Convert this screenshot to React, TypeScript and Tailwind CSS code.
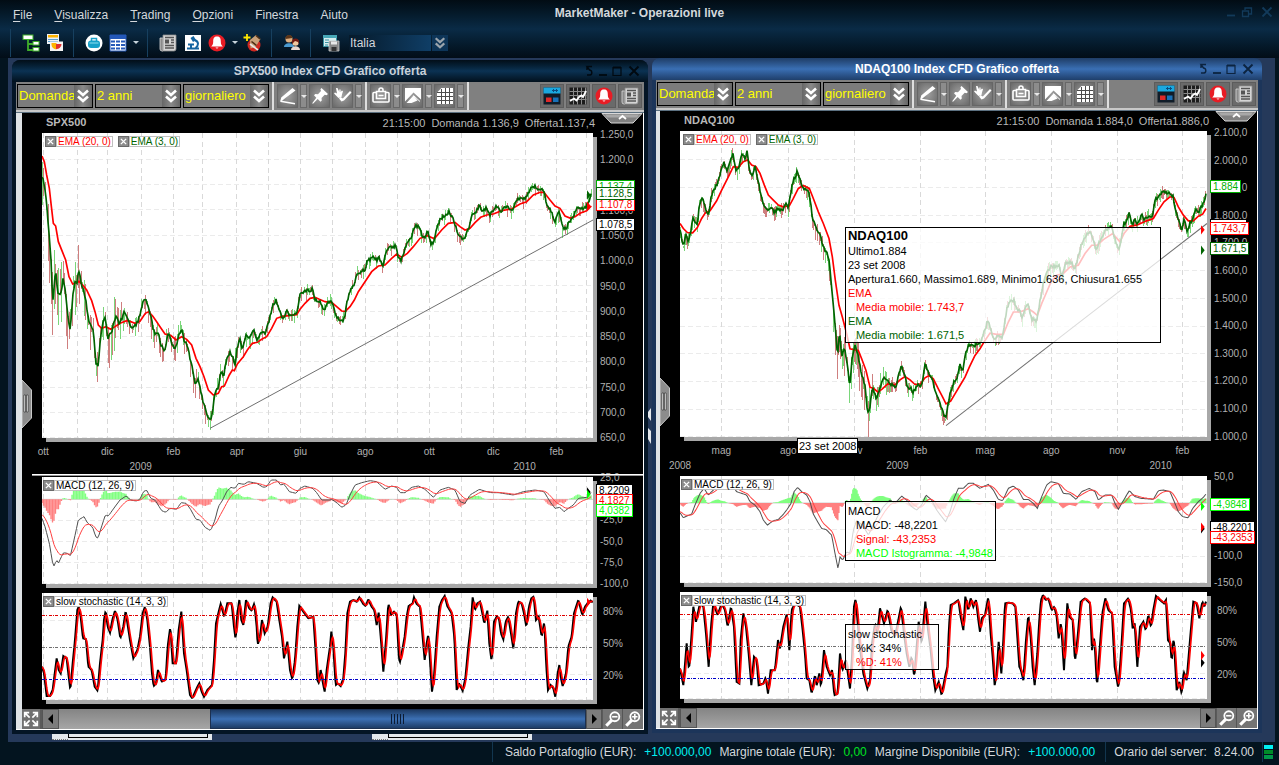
import React from "react";

type Point = [number, number];

/* ---------- series helpers ---------- */

const part = (dx: number, dy: number, text: string): Point[] =>
  text
    .trim()
    .split(/\s+/)
    .map((pair) => {
      const [x, y] = pair.split(",").map(Number);
      return [x + dx, y + dy];
    });

const valueAt = (pts: Point[], x: number): number => {
  if (x <= pts[0][0]) return pts[0][1];
  for (let i = 1; i < pts.length; i++) {
    if (x <= pts[i][0]) {
      const [x0, y0] = pts[i - 1];
      const [x1, y1] = pts[i];
      return x1 === x0 ? y1 : y0 + ((y1 - y0) * (x - x0)) / (x1 - x0);
    }
  }
  return pts[pts.length - 1][1];
};

const noise = (i: number): number => {
  const v = Math.sin(i * 127.1 + 11.7) * 43758.5453;
  return v - Math.floor(v);
};

const toPath = (pts: Point[]): string =>
  pts.map(([x, y], i) => `${i ? "L" : "M"}${x.toFixed(1)} ${y.toFixed(1)}`).join("");

const resample = (pts: Point[], step: number): Point[] => {
  const out: Point[] = [];
  const end = pts[pts.length - 1][0];
  for (let x = 0; x <= end; x += step) out.push([x, valueAt(pts, x)]);
  return out;
};

const ema = (pts: Point[], n: number, start: number): Point[] => {
  const k = 2 / (n + 1);
  let v = start;
  return pts.map(([x, y]) => {
    v = v + k * (y - v);
    return [x, v];
  });
};

const average = (pts: Point[], n: number): Point[] =>
  pts.map(([x], i) => {
    const from = Math.max(0, i - n + 1);
    const window = pts.slice(from, i + 1);
    return [x, window.reduce((s, p) => s + p[1], 0) / window.length];
  });

/* ---------- market data, three units to a pixel ---------- */

interface Market {
  name: string;
  title: string;
  bid: string;
  offer: string;
  width: number;
  step: number;
  grid: number[];
  rows: number[];
  months: [number, string][];
  years: [number, string][];
  prices: string[];
  fast: Point[];
  slow: Point[];
  trend: [number, number, number, number];
  macd: Point[];
  macdStart: number;
  macdZero: number;
  macdRows: number[];
  macdLabels: string[];
  stoch: Point[];
  amp: (x: number) => number;
}

const spx: Market = {
  name: "SPX500",
  title: "SPX500 Index CFD Grafico offerta",
  bid: "1.136,9",
  offer: "1.137,4",
  width: 1653,
  step: 4.5,
  grid: [4, 106, 196, 298, 394, 481, 583, 679, 775, 872, 970, 1066, 1162, 1258, 1354, 1450, 1543, 1633],
  rows: [79, 154, 229, 307, 382, 457, 535, 610, 685, 763, 838, 913],
  months: [[4, "ott"], [196, "dic"], [394, "feb"], [585, "apr"], [775, "giu"], [970, "ago"], [1162, "ott"], [1354, "dic"], [1543, "feb"]],
  years: [[296, "2009"], [1448, "2010"]],
  prices: ["1.250,0", "1.200,0", "", "1.100,0", "1.050,0", "1.000,0", "950,0", "900,0", "850,0", "800,0", "750,0", "700,0", "650,0"],
  fast: [
    ...part(-126, -69, "126,198 133,222 140,285 148,380 153,450 158,578 163,520 167,476 173,548 184,548 189,508 196,545 203,610 211,665 218,560 224,518 232,515 236,475 243,520 250,535 258,575 265,630 273,650 281,665 287,760 295,765 302,680 309,640 315,625 324,685 335,665 341,640 348,617 357,640 366,625 373,604 382,625 392,648 402,652 411,640 420,615 427,580 436,562 444,590 453,620 460,660 467,675 473,660 482,705 494,720 505,670 512,690 520,712 530,708 537,670 545,660 552,690 560,700 568,735 577,775 586,820 595,808 604,850 613,890 622,915 631,935 638,900 646,845 655,830 663,785 671,800 679,750 690,728 699,745 705,765 712,710 720,690 727,715 738,675 748,688 760,658 770,688 785,668 797,668 808,630 818,585 828,570 838,600 850,628 860,600 870,618 885,612 893,600 900,555 915,545 938,538 945,570 960,575 971,605 980,580 990,572"),
    ...part(834, -69, "35,570 45,610 57,628 68,635 76,610 82,570 90,545 103,520 112,488 125,485 135,478 142,452 152,448 160,440 170,450 177,440 188,468 200,420 215,410 227,408 235,445 243,450 250,430 262,398 275,380 285,348 298,348 306,375 315,385 323,365 333,402 342,395 350,355 362,325 375,318 387,305 398,322 408,350 415,375 423,382 433,385 445,360 455,312 468,305 478,288 490,305 500,292 510,315 522,298 530,288 542,308 555,292 565,292 577,298 590,272 600,262 615,268 630,240 640,228 655,235 668,238 674,245 680,288 692,302 705,335 718,302 728,355 740,352 750,332 760,318 772,290 785,298 798,290 806,275 814,252"),
  ],
  slow: [
    ...part(-126, -69, "126,138 133,155 140,195 148,235 153,280 160,340 167,348 175,395 187,425 197,450 207,500 218,522 228,518 237,514 248,525 260,540 275,572 285,605 295,645 305,655 318,650 332,658 345,650 360,640 380,632 392,635 405,640 420,634 436,610 446,605 458,618 470,635 480,650 495,672 512,676 528,690 545,680 560,688 575,705 588,745 600,770 612,800 625,840 640,855 655,850 665,830 673,828 688,795 697,780 703,782 712,762 730,740 742,720 757,700 772,697 785,688 800,680 815,655 830,625 845,620 870,616 890,614 900,598 915,580 930,565 945,562 958,568 975,575 990,577"),
    ...part(834, -69, "35,577 50,590 65,603 76,604 90,590 103,570 115,545 135,515 155,485 175,468 195,465 215,445 230,432 245,442 262,430 280,410 300,385 322,377 343,386 365,360 385,340 405,337 420,350 435,360 450,355 465,338 482,322 500,315 520,312 545,302 575,297 600,282 620,275 640,255 660,247 672,247 690,270 705,288 720,295 735,318 750,324 765,320 780,310 800,302 814,288"),
  ],
  trend: [504, 886, 1653, 261],
  macd: [
    ...part(-126, -111, "126,235 135,260 148,310 153,340 160,382 170,360 175,370 190,338 202,340 211,348 222,300 235,240 252,230 262,248 278,262 287,290 294,295 303,265 316,225 325,228 345,200 360,180 378,168 392,180 408,183 420,178 430,155 440,150 452,175 465,180 485,212 497,217 510,205 530,208 543,188 558,190 570,205 588,238 600,240 615,262 632,272 645,240 655,200 668,180 680,155 692,142 705,145 715,130 732,133 745,125 770,130 790,142 800,140 813,120 830,120 842,135 852,132 868,155 888,160 900,145 915,138 938,145 950,158 965,180 990,180"),
    ...part(834, -111, "35,178 50,188 65,202 78,195 90,165 105,135 125,128 150,122 170,125 195,148 215,138 230,142 240,158 255,158 275,142 295,138 315,148 340,172 360,150 385,142 405,150 420,185 435,190 450,165 478,148 500,155 515,158 535,158 580,165 610,155 645,150 672,155 690,185 705,205 720,202 732,215 745,205 760,195 775,175 800,172 813,158"),
  ],
  macdStart: 110,
  macdZero: 67,
  macdRows: [130, 193, 256, 319],
  macdLabels: ["25,0", "", "-25,0", "-50,0", "-75,0", "-100,0"],
  stoch: [
    ...part(-126, -459, "126,680 132,700 140,768 150,768 158,750 163,710 170,655 176,690 182,700 190,648 200,655 205,700 211,750 218,670 225,600 232,510 236,500 242,530 249,595 258,598 265,680 275,690 284,740 293,752 300,670 308,600 312,540 317,512 323,560 330,578 337,540 345,512 353,540 361,595 370,560 377,512 383,555 390,600 400,655 412,630 420,590 428,520 435,500 442,540 450,620 456,700 461,738 468,730 474,690 485,725 497,718 503,620 511,560 518,670 528,670 536,570 544,515 552,640 560,690 570,765 577,775 590,745 598,730 605,755 612,770 622,750 636,735 642,660 648,550 655,520 662,492 673,530 682,490 695,490 702,560 707,600 712,520 718,480 724,540 730,555 738,480 748,505 755,512 763,490 770,560 773,615 780,590 786,540 794,580 803,560 812,490 818,472 830,485 838,540 846,590 852,655 862,605 870,690 877,718 885,660 892,560 898,498 910,515 925,535 940,530 946,620 952,720 957,730 962,690 968,725 974,755 980,690 990,620"),
    ...part(834, -459, "34,575 40,620 47,735 53,730 62,738 70,715 76,640 82,520 90,485 100,480 110,485 118,472 130,492 137,498 145,478 155,500 163,510 170,555 176,518 183,600 190,695 198,600 205,490 213,525 222,515 230,525 236,640 239,670 246,635 254,590 260,530 266,498 278,490 282,472 290,492 300,500 307,580 314,660 320,610 325,582 330,660 336,755 342,710 350,590 358,500 366,480 374,468 382,498 395,520 403,590 410,750 417,730 428,752 436,715 445,620 452,560 458,472 465,510 472,490 480,485 487,520 493,550 502,512 508,610 515,665 522,545 530,530 537,535 543,580 550,598 557,545 565,530 573,580 580,625 588,520 595,485 605,490 612,520 619,560 627,500 634,475 641,470 648,540 656,530 665,590 673,545 679,680 684,750 692,735 700,745 706,770 713,700 718,675 723,715 728,738 738,700 745,620 755,590 762,520 775,480 787,525 795,500 803,490 812,482 819,488"),
  ],
  amp: (x) => (x < 90 ? 125 : x < 240 ? 105 : x < 470 ? 50 : x < 640 ? 40 : 26),
};

const ndaq: Market = {
  name: "NDAQ100",
  title: "NDAQ100 Index CFD Grafico offerta",
  bid: "1.884,0",
  offer: "1.886,0",
  width: 1581,
  step: 3.2,
  grid: [124, 325, 523, 721, 916, 1114, 1312, 1507],
  rows: [85, 169, 252, 334, 418, 502, 586, 667, 751, 835, 914],
  months: [[124, "mag"], [325, "ago"], [523, "nov"], [721, "feb"], [916, "mag"], [1114, "ago"], [1312, "nov"], [1507, "feb"]],
  years: [[0, "2008"], [652, "2009"], [1442, "2010"]],
  prices: ["2.100,0", "2.000,0", "1.900,0", "1.800,0", "1.700,0", "1.600,0", "1.500,0", "1.400,0", "1.300,0", "1.200,0", "1.100,0", "1.000,0"],
  fast: [
    ...part(-90, -63, "90,355 95,385 101,410 108,370 115,395 122,365 128,320 136,335 142,340 148,285 157,265 166,290 176,318 184,255 195,232 205,215 215,170 222,158 230,185 238,165 248,128 257,178 265,180 275,135 285,145 291,125 297,170 305,200 315,170 325,215 335,265 343,290 352,300 362,290 373,308 384,295 397,300 407,280 415,292 423,245 430,210 442,185 452,215 462,235 478,250 487,320 497,350 508,370 516,395 525,420 536,440 542,500 550,580 558,680 563,740 568,660 576,740 584,710 592,765 599,825 607,740 616,700 626,745 634,790 645,825 653,912 660,890 667,830 673,845 680,870 690,830 700,800 712,812 722,822 738,828 747,790 755,765 765,800 774,835 782,830 790,845 803,822 815,825 826,757 836,790 847,805 858,850 870,880 882,915 888,925 893,880 902,845 912,815 922,800 930,765 937,785 946,730 957,700 968,708 980,700 990,700"),
    ...part(840, -63, "66,680 75,660 83,630 92,655 103,690 112,670 125,685 133,645 142,590 152,572 162,570 170,595 180,600 187,625 196,590 205,585 215,625 230,635 240,570 250,520 260,485 273,470 285,468 298,465 305,500 318,460 335,455 343,480 352,450 362,410 375,380 388,362 398,380 409,420 420,390 433,368 445,350 455,345 463,380 475,420 485,385 490,345 500,330 507,310 518,345 525,325 530,348 545,315 553,330 566,315 578,318 585,270 598,255 610,245 625,250 638,255 645,290 655,325 665,360 672,325 682,368 690,340 700,320 708,300 717,305 727,285 738,255"),
  ],
  slow: [
    ...part(-90, -63, "90,340 100,355 112,367 128,368 142,352 155,325 166,308 180,302 200,272 215,240 235,200 250,170 265,172 280,155 293,150 305,165 318,170 330,190 343,225 355,255 370,270 385,285 400,290 418,287 430,265 445,235 460,226 478,235 490,265 505,305 520,340 537,385 547,440 556,510 567,585 577,620 590,670 600,715 613,718 625,720 635,745 648,780 660,830 672,835 684,845 697,835 713,820 735,823 750,808 765,798 780,808 795,822 812,820 825,802 837,795 850,805 865,835 878,860 888,880 902,872 915,850 930,825 945,800 958,770 975,735 990,715"),
    ...part(840, -63, "75,690 90,668 110,672 130,672 145,635 160,605 180,605 205,595 220,605 232,615 245,580 260,545 273,515 290,495 310,490 330,470 355,465 375,430 395,405 412,405 430,388 458,370 480,395 492,370 510,348 530,345 560,332 580,325 595,300 612,275 630,260 642,262 655,290 670,315 685,332 700,332 715,318 728,312 738,295"),
  ],
  trend: [798, 882, 1581, 277],
  macd: [
    ...part(-90, -108, "90,218 100,233 110,228 125,222 135,195 150,160 162,145 175,165 190,150 205,135 225,130 250,140 260,155 275,160 290,165 300,185 315,195 330,215 340,240 352,255 370,242 385,238 398,225 410,210 423,190 432,155 443,142 455,155 470,165 480,185 490,222 500,240 515,265 528,268 545,285 555,340 564,385 570,350 578,360 590,335 600,340 610,270 620,240 640,258 655,285 670,255 685,225 700,200 720,180 735,190 755,168 770,180 785,200 800,210 815,195 828,165 845,180 860,210 875,230 887,245 900,215 912,175 925,145 940,145 955,130 970,130 990,145"),
    ...part(840, -108, "65,142 85,133 100,150 115,178 128,182 145,145 160,138 175,150 190,178 205,178 220,190 232,205 245,170 260,135 272,125 295,130 310,160 330,162 348,178 365,155 388,145 405,155 415,180 435,165 455,165 465,190 475,208 488,185 500,165 508,152 525,170 545,175 580,178 595,152 610,150 630,155 645,190 655,215 668,230 685,233 698,205 715,185 730,172 738,162"),
  ],
  macdStart: 106,
  macdZero: 81,
  macdRows: [160, 241, 319],
  macdLabels: ["50,0", "", "", "-100,0", "-150,0"],
  stoch: [
    ...part(-90, -456, "90,685 100,735 110,610 117,690 125,580 130,500 138,545 150,490 160,500 168,580 176,680 183,560 190,490 203,525 215,490 225,510 233,560 243,500 252,560 260,725 268,730 272,600 280,520 288,560 296,640 304,735 312,650 320,660 326,735 340,730 347,712 354,760 362,690 375,690 384,600 390,625 400,560 411,520 418,630 425,510 435,490 450,500 458,570 465,640 470,715 478,720 485,760 495,705 500,735 508,700 513,740 522,630 530,680 540,705 546,690 553,765 563,760 570,640 577,690 588,660 600,745 606,650 612,500 617,475 624,560 632,640 640,700 652,745 660,720 666,610 675,550 682,580 690,505 702,550 713,510 724,570 735,590 745,540 753,500 762,580 770,640 778,680 785,650 793,710 800,620 806,545 815,610 826,485 833,560 842,630 850,710 856,750 866,725 875,765 885,710 892,680 897,560 902,495 912,490 925,480 932,530 940,570 946,470 955,510 962,475 970,500 978,480 985,540 990,575"),
    ...part(840, -456, "65,535 75,525 85,470 92,580 98,650 104,735 110,700 116,605 124,700 130,600 135,490 145,488 158,490 166,500 172,590 178,680 183,690 190,720 198,600 205,525 212,590 218,680 224,735 232,640 238,540 243,480 249,465 257,480 265,475 275,510 283,500 290,530 296,595 303,545 312,690 318,560 322,490 328,530 338,540 345,665 353,590 362,485 375,475 390,490 396,630 403,590 411,740 418,640 427,520 436,475 445,510 456,520 464,680 475,745 483,640 492,490 505,475 513,510 518,565 524,550 532,680 540,560 550,545 557,570 565,525 573,560 580,510 588,468 600,480 612,490 618,480 624,600 631,610 635,665 641,590 650,750 658,725 665,760 671,695 680,720 690,600 700,485 710,490 718,535 727,485 733,500 738,485"),
  ],
  amp: (x) => (x < 380 ? 28 : x < 460 ? 42 : x < 570 ? 95 : x < 640 ? 50 : 26),
};

/* ---------- chart drawings ---------- */

const Grid = ({ xs, rows, width, height }: { xs: number[]; rows: number[]; width: number; height: number }) => (
  <g shapeRendering="crispEdges" fill="none">
    <path d={rows.map((y) => `M0 ${y}H${width}`).join("")} stroke="#ebebeb" strokeWidth="3" strokeDasharray="15 9" />
    <path d={xs.map((x) => `M${x} 0V${height}`).join("")} stroke="#d9d9d9" strokeWidth="3" strokeDasharray="15 11" />
  </g>
);

interface Mark {
  y: number;
  fill: string;
}

const Marks = ({ marks, width }: { marks: Mark[]; width: number }) => (
  <g>
    {marks.map((k, i) => (
      <path key={i} d={`M${width - 18} ${k.y - 14}L${width - 7} ${k.y}L${width - 18} ${k.y + 14}Z`} fill={k.fill} />
    ))}
  </g>
);

const PriceChart = ({ m, marks }: { m: Market; marks: Mark[] }) => {
  const up: string[] = [];
  const down: string[] = [];
  const line = resample(m.fast, 3);
  for (let i = 0, x = 1; x <= m.fast[m.fast.length - 1][0]; x += m.step, i++) {
    const y = valueAt(m.fast, x);
    const falling = valueAt(m.fast, x + 4) > valueAt(m.fast, x - 2);
    const a = m.amp(x);
    const top = y - a * noise(i) * (falling ? 0.5 : 0.8);
    const bottom = y + a * Math.pow(noise(i + 500), 1.4) + 4;
    const isDown = falling ? noise(i + 900) > 0.3 : noise(i + 900) > 0.7;
    (isDown ? down : up).push(`M${x.toFixed(1)} ${top.toFixed(1)}V${bottom.toFixed(1)}`);
  }
  const jagged: Point[] = line.map(([x, y], i) => [x, y + (noise(i + 77) - 0.5) * 10]);
  return (
    <svg className="absolute inset-0 h-full w-full" viewBox={`0 0 ${m.width} 915`} preserveAspectRatio="none" aria-hidden="true">
      <Grid xs={m.grid} rows={m.rows} width={m.width} height={915} />
      <path d={up.join("")} stroke="#7ad67a" strokeWidth="3" fill="none" shapeRendering="crispEdges" />
      <path d={down.join("")} stroke="#cf7f7f" strokeWidth="3" fill="none" shapeRendering="crispEdges" />
      <path d={toPath(m.slow)} stroke="#ff0000" strokeWidth="5" fill="none" />
      <path d={toPath(jagged)} stroke="#006400" strokeWidth="5" fill="none" />
      <path d={`M${m.trend[0]} ${m.trend[1]}L${m.trend[2]} ${m.trend[3]}`} stroke="#707070" strokeWidth="3" fill="none" />
      <Marks marks={marks} width={m.width} />
    </svg>
  );
};

const MacdChart = ({ m, marks }: { m: Market; marks: Mark[] }) => {
  const line = resample(m.macd, m.step);
  const signal = ema(line, 9, m.macdStart);
  const plus: string[] = [];
  const minus: string[] = [];
  line.forEach(([x, y], i) => {
    const h = y - signal[i][1];
    (h < 0 ? plus : minus).push(`M${x.toFixed(1)} ${m.macdZero}V${(m.macdZero + h).toFixed(1)}`);
  });
  return (
    <svg className="absolute inset-0 h-full w-full" viewBox={`0 0 ${m.width} 321`} preserveAspectRatio="none" aria-hidden="true">
      <Grid xs={m.grid} rows={m.macdRows} width={m.width} height={321} />
      <path d={`M0 ${m.macdZero}H${m.width}`} stroke="#d0d0d0" strokeWidth="3" />
      <path d={plus.join("")} stroke="#80ff80" strokeWidth="4" />
      <path d={minus.join("")} stroke="#ff8080" strokeWidth="4" />
      <path d={toPath(line)} stroke="#505050" strokeWidth="3" fill="none" />
      <path d={toPath(signal)} stroke="#ff4040" strokeWidth="3" fill="none" />
      <Marks marks={marks} width={m.width} />
    </svg>
  );
};

const StochChart = ({ m, marks }: { m: Market; marks: Mark[] }) => {
  const line = resample(m.stoch, 2);
  const slow = average(line, 4);
  return (
    <svg className="absolute inset-0 h-full w-full" viewBox={`0 0 ${m.width} 321`} preserveAspectRatio="none" aria-hidden="true">
      <Grid xs={m.grid} rows={[82, 244, 320]} width={m.width} height={321} />
      <path d={toPath(line)} stroke="#000" strokeWidth="6" fill="none" />
      <path d={toPath(slow)} stroke="#ff0000" strokeWidth="5" fill="none" />
      <g strokeWidth="3" strokeDasharray="9 4 3 4" fill="none" shapeRendering="crispEdges">
        <path d={`M0 67H${m.width}`} stroke="#e00000" />
        <path d={`M0 163H${m.width}`} stroke="#707070" />
        <path d={`M0 259H${m.width}`} stroke="#0000c8" />
      </g>
      <Marks marks={marks} width={m.width} />
    </svg>
  );
};

/* ---------- icons ---------- */

const Icon = ({ children, className = "h-5 w-5", box = "0 0 20 20" }: { children: React.ReactNode; className?: string; box?: string }) => (
  <svg viewBox={box} className={`block shrink-0 ${className}`} aria-hidden="true">
    {children}
  </svg>
);

const TreeIcon = () => (
  <Icon>
    <path d="M7 7v10h5M7 11h5" stroke="#3fae2a" strokeWidth="1.8" fill="none" />
    <rect x="2" y="2" width="10" height="4.500" fill="#fff" stroke="#3fae2a" />
    <rect x="12" y="8.500" width="6" height="3.500" fill="#fff" stroke="#3fae2a" />
    <rect x="12" y="14.500" width="6" height="3.500" fill="#fff" stroke="#3fae2a" />
  </Icon>
);
const LayoutIcon = () => (
  <Icon>
    <path d="M2 1h12v10H2z" fill="#eef2f6" />
    <path d="M3 2h10v2.500H3z" fill="#ffb400" />
    <path d="M3 6.500h10M3 8.500h10" stroke="#5aa0d0" />
    <path d="M5 8.500h13V18H5z" fill="#f4f4f4" />
    <path d="M6.500 10h5v6.500a5 5 0 0 1-5-5z" fill="#ffb400" />
    <path d="M11 11h5.500a5 5 0 0 1-5.500 5z" fill="#e03030" />
  </Icon>
);
const BagIcon = () => (
  <Icon>
    <circle cx="10" cy="10" r="8.500" fill="#fff" />
    <rect x="4" y="7.500" width="12" height="7.500" rx="3" fill="#18a0c8" />
    <path d="M7.500 8V5.500h5V8" stroke="#18a0c8" strokeWidth="1.500" fill="none" />
    <path d="M5.500 10h9" stroke="#8fe0f0" />
  </Icon>
);
const TableIcon = () => (
  <Icon>
    <path d="M2 2h16v16H2z" fill="#fff" />
    <path d="M2 2h16v4H2z" fill="#2458b8" />
    <path d="M3 7.500h4v2H3zM8 7.500h4v2H8zM13 7.500h4v2h-4zM3 11h4v2H3zM8 11h4v2H8zM13 11h4v2h-4zM3 14.500h4v2H3zM8 14.500h4v2H8zM13 14.500h4v2h-4z" fill="#2458b8" />
    <path d="M2 2h16v16H2z" fill="none" stroke="#2458b8" />
  </Icon>
);
const NewsIcon = () => (
  <Icon>
    <path d="M2 5h3v13H4a2 2 0 0 1-2-2z" fill="#8a8a8a" stroke="#d8d8d8" strokeWidth=".8" />
    <path d="M5 2h13v14a2 2 0 0 1-2 2H4a2 2 0 0 0 1-2z" fill="#d4d4d4" stroke="#8a8a8a" strokeWidth=".8" />
    <path d="M7 4.500h9M13 7h3M13 9.500h3M7 12.500h9M7 15h9" stroke="#555" strokeWidth="1.300" />
    <path d="M7 6.500h4v4H7z" fill="#555" />
  </Icon>
);
const MicroscopeIcon = () => (
  <Icon>
    <path d="M2 2h16v16H2z" fill="#fff" />
    <path d="M7.500 5l3-2 2.500 4-3 2z" fill="#1464a0" />
    <path d="M11.500 7c5 1.500 4 6 1 8" stroke="#1464a0" strokeWidth="2" fill="none" />
    <path d="M4 15.500h12M5 11.500h6M8 12v3" stroke="#1464a0" strokeWidth="2" />
  </Icon>
);
const BellIcon = () => (
  <Icon>
    <circle cx="10" cy="10" r="8.500" fill="#e81c24" />
    <path d="M10 3.500c-3 0-3.800 2-3.800 5 0 2.500-.6 3.500-2 5h11.600c-1.400-1.500-2-2.500-2-5 0-3-.8-5-3.800-5zM8.500 14.500a1.600 1.600 0 0 0 3 0z" fill="#fff" />
  </Icon>
);
const AlertNewIcon = () => (
  <Icon>
    <circle cx="11" cy="12" r="6.500" fill="#d02820" />
    <path d="M7 7l6-5 4.500 4-5 8-5 1.500z" fill="#c8a078" />
    <path d="M13 2.500l4 3.500M8.500 8.500l5 4" stroke="#4a2c14" strokeWidth="1.600" />
    <path d="M7 11l8 6" stroke="#e8e8e8" strokeWidth="1.600" />
    <path d="M4 1v7M.500 4.500h7" stroke="#ffe800" strokeWidth="1.800" />
  </Icon>
);
const PeopleIcon = () => (
  <Icon>
    <circle cx="7" cy="6" r="3.500" fill="#e0b080" />
    <path d="M3.500 6a3.500 3.500 0 0 1 7-1z" fill="#5a3418" />
    <path d="M2 14c0-5 10-5 10 0z" fill="#4a9ad0" />
    <circle cx="13.500" cy="9.500" r="3.200" fill="#f0c8a0" />
    <path d="M10 11V9a3.500 3.500 0 0 1 7 0v2l-1-2-3-1z" fill="#701810" />
    <path d="M9 17c0-5 9-5 9 0z" fill="#e8d8d0" />
  </Icon>
);
const SaveLayoutIcon = () => (
  <Icon>
    <path d="M2.500 2.500h13v11h-13z" fill="#d8eef0" stroke="#3890a0" />
    <path d="M2 2h14v3H2z" fill="#48a8b8" />
    <path d="M4 7h4M4 9.500h4M4 12h3" stroke="#3890a0" />
    <path d="M8 8h10v10H8z" fill="#888" stroke="#c8c8c8" strokeWidth=".8" />
    <path d="M10 8.500h6v3h-6z" fill="#e8e8e8" />
    <path d="M10.500 14h5v4h-5z" fill="#333" />
  </Icon>
);
const Chevrons = ({ className }: { className: string }) => (
  <Icon box="0 0 12 14" className={className}>
    <path d="M1 1.500l5 4.500 5-4.500M1 7.500L6 12l5-4.500" stroke="currentColor" strokeWidth="2.600" fill="none" />
  </Icon>
);
const BrushIcon = () => (
  <Icon>
    <path d="M14.500 2l3 2.500L8 11.500l-4 3.300-1.800.700 1-4z" fill="#fff" />
    <path d="M2.500 15.200L17 17.800" stroke="#fff" strokeWidth="1.500" fill="none" />
  </Icon>
);
const PinIcon = () => (
  <Icon>
    <path d="M11.500 2l6.500 6-1.500 1.200-1.800-.400-3.200 3.200.300 2.500-1.300 1.200-2.800-2.600L3 17.800l-.800-.600L6.300 11.800 4 9.300l1.300-1.200 2.700.200 3-3.200-.600-1.800z" fill="#fff" />
  </Icon>
);
const HandPenIcon = () => (
  <Icon>
    <path d="M3 2h1.500l1.800 4V3.500h1.300V6l1.400-1.500 1 .800L9 8.500 8.500 11 5.500 12 2 8.500l-1-1.300 1-.700 2 1z" fill="#fff" />
    <path d="M17 5l1.500 1.500-7.500 8-2.500 1L6 12.500l1.500-1.500 2.300 1.500z" fill="#fff" />
  </Icon>
);
const ClipboardIcon = () => (
  <Icon>
    <path d="M6 6.500H3c-.600 0-1 .400-1 1V15c0 .600.400 1 1 1h14c.600 0 1-.400 1-1V7.500c0-.600-.400-1-1-1h-3" fill="none" stroke="#fff" strokeWidth="1.600" />
    <path d="M8 5.500V4a2 2 0 0 1 4 0v1.500M5.500 5.500h9v7h-9z" fill="none" stroke="#fff" strokeWidth="1.600" />
    <path d="M7.500 9.500h5" stroke="#fff" strokeWidth="1.500" />
  </Icon>
);
const TrendIcon = () => (
  <Icon>
    <path d="M2 2h16v11.500L10.500 6.500 2 15.500z" fill="#fff" />
    <path d="M3.500 17L10.500 9.500l4 5-6 2.500z" fill="#fff" />
    <path d="M10.500 9.500l6.500 6" stroke="#fff" />
  </Icon>
);
const GridIcon = () => (
  <Icon>
    <path d="M6.500 2H18v16H2V6.500z" fill="#fff" />
    <path d="M6.500 3v15M10.500 2v16M14.500 2v16M2 6.500h16M2 10.500h16M2 14.500h16" stroke="#4c4c4c" />
  </Icon>
);
const PanelIcon = () => (
  <Icon>
    <path d="M1.500 1.500h17v17h-17z" fill="#101c28" />
    <path d="M1.500 1.500h17v6h-17z" fill="#1aa8e0" />
    <path d="M10 4.500h6M11.500 3v3M14.500 3v3" stroke="#0c4c80" />
    <path d="M4 11.500h5.500v4.500H4z" fill="#e02828" />
    <path d="M11 11.500h5.500v4.500H11z" fill="#1870b8" />
  </Icon>
);
const ChartIcon = () => (
  <Icon>
    <path d="M1.500 1.500h17v17h-17z" fill="#1c1c1c" />
    <path d="M5.500 1.500v17M9.500 1.500v17M13.500 1.500v17M17.500 1.500v17M1.500 5.500h17M1.500 9.500h17M1.500 13.500h17" stroke="#8a8a8a" />
    <path d="M2 15l4-2.500 2.500 2L11 11l2.500-1.500L15 11l3-6" stroke="#fff" strokeWidth="1.800" fill="none" />
  </Icon>
);
const ZoomIcon = ({ plus }: { plus?: boolean }) => (
  <Icon className="h-[18px] w-[18px]">
    <path d="M9 11l-6.500 6.500" stroke="#fff" strokeWidth="3.500" />
    <circle cx="12" cy="7.500" r="5" fill="#777" stroke="#fff" strokeWidth="2" />
    <path d={plus ? "M9 7.500h6M12 4.500v6" : "M9 7.500h6"} stroke="#fff" strokeWidth="1.800" />
  </Icon>
);
const ExpandIcon = () => (
  <Icon className="h-[18px] w-[18px]">
    <path d="M3 8V3h5M12 3h5v5M17 12v5h-5M8 17H3v-5M3.500 3.500L8.500 8.500M16.500 3.500L11.500 8.500M16.500 16.500L11.500 11.500M3.500 16.500L8.500 11.500" stroke="#fff" strokeWidth="1.900" fill="none" />
  </Icon>
);

/* ---------- controls ---------- */

const Caret = ({ light }: { light?: boolean }) => (
  <span className={`block h-0 w-0 border-x-[3px] border-t-[3px] border-x-transparent ${light ? "border-t-[#e8e8e8]" : "border-t-[#c8d4dc]"}`} />
);

const Rule = () => <span className="h-7 w-px bg-[#17405f]" />;

const MainButton = ({ label, children, className = "" }: { label: string; children: React.ReactNode; className?: string }) => (
  <button type="button" aria-label={label} className={`flex h-5 w-5 items-center justify-center ${className}`}>
    {children}
  </button>
);

const Combo = ({ label, value, className }: { label: string; value: string; className: string }) => (
  <div className={`relative h-6 shrink-0 border border-black bg-[#7c7c7c] ${className}`}>
    <select aria-label={label} defaultValue={value} className="h-full w-full appearance-none bg-transparent pl-px text-[13px] leading-[22px] text-[#ffff00] outline-none">
      <option>{value}</option>
    </select>
    <span className="pointer-events-none absolute inset-y-0 right-0 flex w-[18px] items-center justify-center bg-linear-to-r from-[#666] via-[#8a8a8a] to-[#666] text-white">
      <Chevrons className="h-3.5 w-3" />
    </span>
  </div>
);

const Tool = ({ label, menu, children }: { label: string; menu?: boolean; children: React.ReactNode }) => (
  <div className="flex shrink-0 gap-0.5">
    <button type="button" aria-label={label} className="flex h-6 w-[21px] items-center justify-center border border-[#666] bg-radial from-[#a0a0a0] to-[#686868]">
      {children}
    </button>
    {menu && (
      <button type="button" aria-label={`${label}, menu`} className="flex h-6 w-[7px] items-center justify-center border border-[#686868] bg-[#8c8c8c]">
        <Caret light />
      </button>
    )}
  </div>
);

const SideTool = ({ label, children }: { label: string; children: React.ReactNode }) => (
  <button type="button" aria-label={label} className="flex h-6 w-6 items-center justify-center border border-[#5c5c5c] bg-[#6a6a6a]">
    {children}
  </button>
);

const Divider = () => <span className="mx-px h-7 w-0.5 shrink-0 bg-[#dedede]" />;

const WindowButtons = ({ color }: { color: string }) => (
  <div className={`absolute inset-y-0 right-2 flex items-center gap-0.5 ${color}`}>
    <button type="button" aria-label="Sgancia">
      <Icon box="0 0 12 12" className="h-3 w-3">
        <path d="M9 1.500H4l2.500 3.500c3 .300 3 4.500.500 5H4M4 1.500V5" stroke="currentColor" strokeWidth="1.400" fill="none" />
      </Icon>
    </button>
    <button type="button" aria-label="Riduci">
      <Icon box="0 0 12 12" className="h-3 w-3">
        <path d="M2 10h8" stroke="currentColor" strokeWidth="1.800" />
      </Icon>
    </button>
    <button type="button" aria-label="Ingrandisci">
      <Icon box="0 0 12 12" className="h-3 w-3">
        <path d="M2 2.500h8v8H2z" stroke="currentColor" strokeWidth="1.200" fill="none" />
        <path d="M2 2.500h8" stroke="currentColor" strokeWidth="2" />
      </Icon>
    </button>
    <button type="button" aria-label="Chiudi" className="ml-[3px]">
      <Icon box="0 0 12 12" className="h-3 w-3">
        <path d="M1.500 1.500l9 9M10.500 1.500l-9 9" stroke="currentColor" strokeWidth="1.900" />
      </Icon>
    </button>
  </div>
);

const Indicator = ({ label, color }: { label: string; color: string }) => (
  <span className="flex h-[11px] items-center bg-white">
    <button type="button" aria-label={`Rimuovi ${label}`} className="flex h-[11px] w-[11px] items-center justify-center border border-[#6a6a6a] bg-[#8c8c8c]">
      <Icon box="0 0 8 8" className="h-[7px] w-[7px]">
        <path d="M1 1l6 6M7 1L1 7" stroke="#fff" strokeWidth="1.600" />
      </Icon>
    </button>
    <span className={`border border-[#c0c0c0] px-px text-[10px] leading-[9px] whitespace-nowrap ${color}`}>{label}</span>
  </span>
);

interface TagData {
  text: string;
  top: number;
  style: string;
}

const Tag = ({ tag }: { tag: TagData }) => (
  <span className={`absolute left-[3px] h-[13px] border bg-white px-0.5 text-[10px] leading-[11px] whitespace-nowrap ${tag.style}`} style={{ top: tag.top }}>
    {tag.text}
  </span>
);

/* ---------- chart window ---------- */

interface PlotRowProps {
  grow: string;
  axisClass: string;
  labels: string[];
  tags: TagData[];
  legend: React.ReactNode;
  children: React.ReactNode;
  tip?: React.ReactNode;
}

const PlotRow = ({ grow, axisClass, labels, tags, legend, children, tip }: PlotRowProps) => (
  <div className={`flex min-h-0 pl-5 ${grow}`}>
    <div className="relative min-w-0 flex-1 bg-white shadow-[4px_4px_0_0_#a8a8a8]">
      {children}
      <div className="absolute top-[3px] left-px flex gap-[5px]">{legend}</div>
      {tip}
    </div>
    <div className="relative flex w-[50px] flex-col">
      <ul className={`flex flex-1 flex-col justify-between text-[10px] leading-3 text-[#b0b0b0] ${axisClass}`}>
        {labels.map((l, i) => (
          <li key={i} className="h-3">
            {l}
          </li>
        ))}
      </ul>
      {tags.map((t) => (
        <Tag key={t.top} tag={t} />
      ))}
    </div>
  </div>
);

interface Tips {
  price?: React.ReactNode;
  macd?: React.ReactNode;
  stoch?: React.ReactNode;
  date?: React.ReactNode;
}

interface ChartWindowProps {
  m: Market;
  active?: boolean;
  className: string;
  edge: string;
  priceTags: TagData[];
  macdTags: TagData[];
  priceMarks: Mark[];
  macdMarks: Mark[];
  stochMarks: Mark[];
  tips?: Tips;
}

const ChartWindow = ({ m, active, className, edge, priceTags, macdTags, priceMarks, macdMarks, stochMarks, tips = {} }: ChartWindowProps) => (
  <section
    aria-label={m.title}
    className={`flex min-w-0 flex-col rounded-t-lg px-1 pb-1 ${active ? "bg-[#1c355a]" : "bg-[#041525]"} ${className}`}
  >
    <header
      className={`relative -mx-1 flex h-[22px] shrink-0 items-center justify-center rounded-t-lg text-xs font-bold ${
        active
          ? "bg-linear-to-b from-[#1f3d66] via-[#3a6fb4] to-[#1f3f6b] text-white"
          : "bg-linear-to-b from-[#020e18] via-[#0b3253] to-[#03111d] text-[#c8d0d8]"
      }`}
    >
      <h2>{m.title}</h2>
      <WindowButtons color={active ? "text-[#0c2440]" : "text-[#010910]"} />
    </header>

    <div className="flex h-7 shrink-0 items-center gap-0.5 bg-[#808080] pr-0.5 pl-px">
      <Combo label="Prezzo" value="Domanda" className="w-[76px]" />
      <Combo label="Periodo" value="2 anni" className="w-[86px]" />
      <Combo label="Intervallo" value="giornaliero" className="w-[86px]" />
      <Divider />
      <Tool label="Disegna" menu><BrushIcon /></Tool>
      <Tool label="Fissa"><PinIcon /></Tool>
      <Tool label="Modifica" menu><HandPenIcon /></Tool>
      <Divider />
      <Tool label="Appunti" menu><ClipboardIcon /></Tool>
      <Tool label="Tipo di grafico" menu><TrendIcon /></Tool>
      <Tool label="Griglia" menu><GridIcon /></Tool>
      <Divider />
      <div className="ml-auto flex gap-0.5">
        <SideTool label="Operazione"><PanelIcon /></SideTool>
        <SideTool label="Grafico"><ChartIcon /></SideTool>
        <SideTool label="Avvisi"><BellIcon /></SideTool>
        <SideTool label="Notizie"><NewsIcon /></SideTool>
      </div>
    </div>
    <div className="h-[3px] shrink-0 border-b border-[#5c7080] bg-[#c8c8c8]" />

    <div className={`flex min-h-0 flex-1 flex-col border-r border-b border-white bg-[#dfe3e6] ${edge}`}>
      <div className="relative flex min-h-0 flex-1 flex-col bg-black">
        <div className="flex h-5 shrink-0 items-center justify-between pr-12 pl-6 text-[11px] text-[#b8b8b8]">
          <h3 className="pb-px font-bold">{m.name}</h3>
          <p className="flex gap-1.5">
            <span>21:15:00</span>
            <span>Domanda {m.bid}</span>
            <span>Offerta{m.offer}</span>
          </p>
        </div>
        <button type="button" aria-label="Comprimi" className="absolute top-0 right-0">
          <Icon box="0 0 42 11" className="h-[11px] w-[42px]">
            <path d="M1 .500h40l-9 9.500H10z" fill="#808080" stroke="#d8d8d8" />
            <path d="M4 1.500h34l-2 3H6z" fill="#a8a8a8" />
            <path d="M18 6l3.500-3L25 6" stroke="#fff" strokeWidth="1.800" fill="none" />
          </Icon>
        </button>
        <button type="button" aria-label="Apri pannello" className="absolute top-[267px] left-0">
          <Icon box="0 0 10 48" className="h-12 w-2.5">
            <path d="M0 0l9.500 10v28L0 48z" fill="#8c8c8c" stroke="#c8c8c8" />
            <path d="M2 15h1.500v17H2zM4.500 15H6v17H4.500z" fill="#fff" stroke="#222" strokeWidth=".6" />
          </Icon>
        </button>

        <PlotRow
          grow="flex-[305]"
          axisClass="-my-1.5 pt-0.5 pl-[7px]"
          labels={m.prices}
          tags={priceTags}
          tip={tips.price}
          legend={
            <>
              <span className="pl-0.5"><Indicator label="EMA (20, 0)" color="text-[#ff0000]" /></span>
              <Indicator label="EMA (3, 0)" color="text-[#006400]" />
            </>
          }
        >
          <PriceChart m={m} marks={priceMarks} />
        </PlotRow>

        <div className="flex h-[39px] shrink-0 pl-5">
          <div className="relative min-w-0 flex-1 text-[10px] leading-3 text-[#b0b0b0]">
            {m.months.map(([x, t]) => (
              <span key={x} className="absolute top-2 -translate-x-1/2" style={{ left: `${(x / m.width) * 100}%` }}>
                {t}
              </span>
            ))}
            {m.years.map(([x, t]) => (
              <span key={x} className="absolute top-[23px] -translate-x-1/2" style={{ left: `${(x / m.width) * 100}%` }}>
                {t}
              </span>
            ))}
            {tips.date}
          </div>
          <div className="w-[50px]" />
        </div>
        {!active && <div className="z-10 -mt-[3px] mb-px ml-2.5 h-0.5 shrink-0 border-b border-[#999] bg-white" />}

        <PlotRow
          grow="flex-[107]"
          axisClass="-my-1.5 pl-[7px] pt-px"
          labels={m.macdLabels}
          tags={macdTags}
          tip={tips.macd}
          legend={<Indicator label="MACD (12, 26, 9)" color="text-black" />}
        >
          <MacdChart m={m} marks={macdMarks} />
        </PlotRow>
        <div className="h-[9px] shrink-0" />
        <PlotRow
          grow="flex-[107]"
          axisClass="pt-[13px] pb-[18px] pl-2.5"
          labels={["80%", "50%", "20%"]}
          tags={[]}
          tip={tips.stoch}
          legend={<Indicator label="slow stochastic (14, 3, 3)" color="text-black" />}
        >
          <StochChart m={m} marks={stochMarks} />
        </PlotRow>
        <div className="h-[9px] shrink-0" />

        <div className="flex h-5 shrink-0 bg-[#5a5a5a]">
          <button type="button" aria-label="Adatta" className="flex w-[18px] items-center justify-center bg-[#707070]"><ExpandIcon /></button>
          <button type="button" aria-label="Indietro" className="ml-0.5 flex w-[17px] items-center justify-center border border-[#555] bg-[#7c7c7c]">
            <span className="block h-0 w-0 border-y-[5px] border-r-[5px] border-y-transparent border-r-black" />
          </button>
          <div className="flex min-w-0 flex-1 bg-linear-to-b from-[#848484] to-[#a6a6a6]">
            {!active && (
              <>
                <div className="flex-[151]" />
                <div className="flex flex-[375] items-center justify-center gap-0.5 border border-[#1c3050] bg-linear-to-b from-[#1d3c66] via-[#3c70b4] to-[#1d3c66]">
                  {[0, 1, 2, 3, 4].map((i) => (
                    <span key={i} className="h-2.5 w-px bg-[#0c1c34]" />
                  ))}
                </div>
              </>
            )}
          </div>
          <button type="button" aria-label="Avanti" className="flex w-4 items-center justify-center border border-[#555] bg-[#7c7c7c]">
            <span className="block h-0 w-0 border-y-[5px] border-l-[5px] border-y-transparent border-l-black" />
          </button>
          <button type="button" aria-label="Riduci zoom" className="ml-px flex w-5 items-center justify-center border-r border-[#555] bg-[#747474]"><ZoomIcon /></button>
          <button type="button" aria-label="Aumenta zoom" className="flex w-5 items-center justify-center bg-[#747474]"><ZoomIcon plus /></button>
        </div>
      </div>
    </div>
  </section>
);

/* ---------- page ---------- */

const menus = ["File", "Visualizza", "Trading", "Opzioni", "Finestra", "Aiuto"];

const tipBox = "absolute left-[31.300%] z-20 border border-black bg-white/75 px-0.5 text-[11px] leading-[14px] text-black whitespace-nowrap";

const ndaqTips: Tips = {
  price: (
    <div className={`${tipBox} top-24 w-[60%]`}>
      <h4 className="text-[13px] leading-4 font-bold">NDAQ100</h4>
      <p>Ultimo1.884</p>
      <p>23 set 2008</p>
      <p>Apertura1.660, Massimo1.689, Minimo1.636, Chiusura1.655</p>
      <div className="text-[#ff0000]">
        <p>EMA</p>
        <p className="pl-2">Media mobile: 1.743,7</p>
      </div>
      <div className="text-[#006400]">
        <p>EMA</p>
        <p className="pl-2">Media mobile: 1.671,5</p>
      </div>
    </div>
  ),
  macd: (
    <div className={`${tipBox} top-[25px] pt-0.5`}>
      <p>MACD</p>
      <p className="pl-2">MACD: -48,2201</p>
      <p className="pl-2 text-[#ff0000]">Signal: -43,2353</p>
      <p className="pl-2 text-[#00ff00]">MACD Istogramma: -4,9848</p>
    </div>
  ),
  stoch: (
    <div className={`${tipBox} top-8 pt-0.5 pr-4`}>
      <p>slow stochastic</p>
      <p className="pl-2">%K: 34%</p>
      <p className="pl-2 text-[#ff0000]">%D: 41%</p>
    </div>
  ),
  date: (
    <span className="absolute top-px left-[22.200%] z-10 border border-black bg-white px-px text-[11px] leading-[14px] whitespace-nowrap text-black">
      23 set 2008
    </span>
  ),
};

const DockedStrip = ({ className }: { className: string }) => (
  <div className={`absolute bottom-0.5 flex h-1.5 w-40 bg-[#e4e8ec] ${className}`}>
    <span className="w-4 border-b border-dotted border-[#777]" />
    <span className="mr-1 mb-0.5 flex-1 border-x border-b border-black" />
  </div>
);

export default function App() {
  return (
    <div
      className="flex h-screen min-h-[600px] flex-col overflow-hidden bg-[#03141f] text-xs text-[#d4d8dc]"
      style={{ fontFamily: '"Liberation Sans", Arial, sans-serif' }}
    >
      <header className="relative shrink-0 bg-linear-to-b from-[#020c14] via-[#0a2b46] to-[#020d17]">
        <div className="flex h-[29px] items-center">
          <nav className="flex gap-[22px] pl-[13px]">
            {menus.map((name, i) => (
              <a key={name} href={`#${name.toLowerCase()}`}>
                {i < 4 ? <span className="underline underline-offset-2">{name[0]}</span> : name[0]}
                {name.slice(1)}
              </a>
            ))}
          </nav>
        </div>
        <h1 className="absolute inset-x-0 top-[5px] text-center leading-4 font-bold">MarketMaker - Operazioni live</h1>
        <div className="absolute top-1.5 right-1.5 flex gap-1 text-[#123a5a]">
          <button type="button" aria-label="Riduci finestra">
            <Icon box="0 0 12 12" className="h-3 w-3"><path d="M2 9.500h8" stroke="currentColor" strokeWidth="1.800" /></Icon>
          </button>
          <button type="button" aria-label="Ripristina finestra">
            <Icon box="0 0 12 12" className="h-3 w-3"><path d="M1.500 5h6v5.500h-6zM4 4V2h6.500v6H8" stroke="currentColor" strokeWidth="1.300" fill="none" /></Icon>
          </button>
          <button type="button" aria-label="Chiudi finestra" className="ml-1">
            <Icon box="0 0 12 12" className="h-3 w-3"><path d="M1.500 1.500l9 9M10.500 1.500l-9 9" stroke="currentColor" strokeWidth="1.900" /></Icon>
          </button>
        </div>

        <div className="flex h-[29px] items-center pb-0.5 pl-2.5">
          <Rule />
          <MainButton label="Struttura" className="ml-2.5"><TreeIcon /></MainButton>
          <MainButton label="Layout" className="ml-1"><LayoutIcon /></MainButton>
          <span className="ml-2" />
          <Rule />
          <MainButton label="Conto" className="ml-2.5"><BagIcon /></MainButton>
          <MainButton label="Tabella" className="ml-1"><TableIcon /></MainButton>
          <button type="button" aria-label="Tabella, menu" className="ml-[5px]"><Caret /></button>
          <span className="ml-2" />
          <Rule />
          <MainButton label="Notizie" className="ml-2.5"><NewsIcon /></MainButton>
          <MainButton label="Ricerca" className="ml-[5px]"><MicroscopeIcon /></MainButton>
          <MainButton label="Avvisi" className="ml-1"><BellIcon /></MainButton>
          <button type="button" aria-label="Avvisi, menu" className="ml-[5px]"><Caret /></button>
          <MainButton label="Nuovo avviso" className="ml-[5px]"><AlertNewIcon /></MainButton>
          <span className="ml-2" />
          <Rule />
          <MainButton label="Comunità" className="ml-2.5"><PeopleIcon /></MainButton>
          <span className="ml-2" />
          <Rule />
          <MainButton label="Salva layout" className="ml-2.5"><SaveLayoutIcon /></MainButton>
          <div className="relative ml-2 h-4 w-[99px]">
            <select aria-label="Layout salvati" defaultValue="Italia" className="h-full w-[82px] appearance-none bg-linear-to-r from-[#061a2b] to-[#0f3e66] pl-px text-xs leading-4 text-[#d4d8dc] outline-none">
              <option>Italia</option>
            </select>
            <span className="pointer-events-none absolute inset-y-0 right-0 flex w-4 items-center justify-center bg-[#0d3558] text-[#9aa4ac]">
              <Chevrons className="h-3 w-3" />
            </span>
          </div>
        </div>
      </header>

      <main className="relative mr-1 ml-2 grid min-h-0 flex-1 grid-cols-[636fr_610fr] gap-1 bg-[#25395a] pr-[13px] pl-1">
        <DockedStrip className="left-11" />
        <DockedStrip className="left-[364px]" />
        <ChartWindow
          m={spx}
          className="mt-0.5 mb-2 min-h-0"
          edge="pl-1.5"
          priceTags={[
            { text: "1.137,4", top: 47, style: "border-[#00b000] text-[#00b000]" },
            { text: "1.107,8", top: 65, style: "border-[#ff0000] text-[#ff0000]" },
            { text: "1.128,5", top: 54, style: "border-[#006400] text-[#006400]" },
            { text: "1.078,5", top: 85, style: "border-black text-black" },
          ]}
          macdTags={[
            { text: "8,2209", top: 7, style: "border-black text-black" },
            { text: "4,1827", top: 17, style: "border-[#ff0000] text-[#ff0000]" },
            { text: "4,0382", top: 27, style: "border-[#00ff00] text-[#00ff00]" },
          ]}
          priceMarks={[{ y: 186, fill: "#006400" }, { y: 219, fill: "#ff0000" }]}
          macdMarks={[{ y: 45, fill: "#000" }, { y: 52, fill: "#00ff00" }]}
          stochMarks={[{ y: 28, fill: "#ff0000" }]}
        />
        <ChartWindow
          m={ndaq}
          active
          className="mb-[9px] min-h-0"
          edge="pl-1"
          priceTags={[
            { text: "1.884", top: 49, style: "border-[#00b000] text-[#00b000]" },
            { text: "", top: 88, style: "w-[37px] border-black" },
            { text: "1.743,7", top: 91, style: "border-[#ff0000] text-[#ff0000]" },
            { text: "1.671,5", top: 111, style: "border-[#006400] text-[#006400]" },
          ]}
          macdTags={[
            { text: "-4,9848", top: 22, style: "border-[#00ff00] text-[#00e000]" },
            { text: "-48,2201", top: 45, style: "border-black text-black" },
            { text: "-43,2353", top: 55, style: "border-[#ff0000] text-[#ff0000]" },
          ]}
          priceMarks={[{ y: 296, fill: "#ff0000" }, { y: 357, fill: "#006400" }]}
          macdMarks={[{ y: 91, fill: "#00ff00" }, { y: 158, fill: "#000" }, { y: 153, fill: "#ff0000" }]}
          stochMarks={[{ y: 212, fill: "#000" }, { y: 190, fill: "#ff0000" }]}
          tips={ndaqTips}
        />
        <svg className="absolute top-[350px] left-[639px] h-9 w-[5px]" viewBox="0 0 5 36" aria-hidden="true">
          <path d="M4 0v13L1 9V4zM1 20l3 3v13l-3-5z" fill="#e4e8ec" />
        </svg>
      </main>

      <footer className="flex h-[23px] shrink-0 items-stretch justify-end pb-[3px]">
        <p className="flex items-center gap-2 border-l border-[#12364f] pr-2.5 pl-3">
          <span>Saldo Portafoglio (EUR):</span>
          <span className="text-[#00f0f0]">+100.000,00</span>
          <span>Margine totale (EUR):</span>
          <span className="text-[#00e020]">0,00</span>
          <span>Margine Disponibile (EUR):</span>
          <span className="text-[#00f0f0]">+100.000,00</span>
        </p>
        <p className="flex items-center gap-[7px] border-l border-[#12364f] pr-2 pl-2">
          <span>Orario del server:</span>
          <span>8.24.00</span>
        </p>
        <div className="flex w-[17px] flex-col justify-center gap-px border-l border-[#12364f] pr-1.5 pl-px" role="img" aria-label="Connessione attiva">
          <span className="h-1 bg-[#00f0f0]" />
          <span className="h-1 bg-[#008c28]" />
          <span className="h-1 bg-[#009848]" />
        </div>
      </footer>
    </div>
  );
}
